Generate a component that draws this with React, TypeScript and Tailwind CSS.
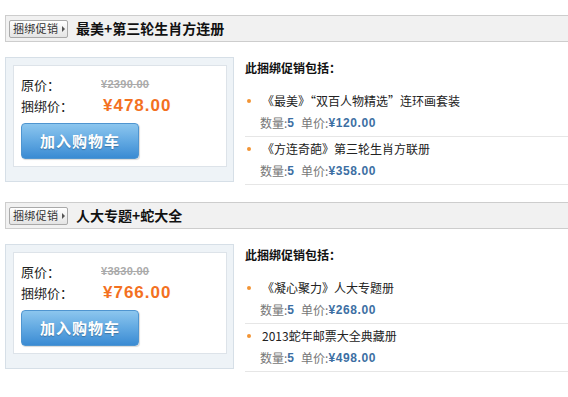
import React from 'react';

interface BundleItem {
  name: string;
  qty: number;
  price: string;
}

interface Bundle {
  title: string;
  original: string;
  price: string;
  items: BundleItem[];
}

const bundles: Bundle[] = [
  {
    title: '最美+第三轮生肖方连册',
    original: '¥2390.00',
    price: '¥478.00',
    items: [
      { name: '《最美》“双百人物精选”连环画套装', qty: 5, price: '¥120.00' },
      { name: '《方连奇葩》第三轮生肖方联册', qty: 5, price: '¥358.00' },
    ],
  },
  {
    title: '人大专题+蛇大全',
    original: '¥3830.00',
    price: '¥766.00',
    items: [
      { name: '《凝心聚力》人大专题册', qty: 5, price: '¥268.00' },
      { name: '2013蛇年邮票大全典藏册', qty: 5, price: '¥498.00' },
    ],
  },
];

const cjk = "font-['Noto_Sans_CJK_SC','Noto_Sans',sans-serif]";

// 左侧价格框
function PriceBox({ bundle }: { bundle: Bundle }) {
  return (
    <div className="w-[229px] shrink-0 border border-[#d6dfe7] bg-[#eef3f7] pt-[7px] pr-[6px] pb-[14px] pl-[7px]">
      <div className="border border-[#dde3e9] bg-white px-[7px] pt-[8px] pb-[7px]">
        <div className="flex h-[21px] items-center text-[13px] text-[#222]">
          <span className="w-[80px]">原价：</span>
          <span className="font-['Liberation_Sans',sans-serif] text-[11px] font-bold tracking-[0.3px] text-[#aaa] line-through">
            {bundle.original}
          </span>
        </div>
        <div className="flex h-[21px] items-center text-[13px] text-[#222]">
          <span className="w-[82px]">捆绑价：</span>
          <span className="font-['Liberation_Sans',sans-serif] text-[17px] font-bold tracking-[1px] text-[#f3711f]">
            {bundle.price}
          </span>
        </div>
        <button className="mt-[7px] flex h-[36px] w-[118px] items-center justify-center rounded-[4px] border border-[#4f95d0] bg-gradient-to-b from-[#8cc6ee] via-[#62a9e2] to-[#3a8bd3] text-[15px] font-bold tracking-[1px] text-white shadow-[1px_1px_1px_rgba(0,0,0,0.15)] [text-shadow:0_1px_1px_rgba(0,0,0,0.25)]">
          加入购物车
        </button>
      </div>
    </div>
  );
}

function ItemList({ items }: { items: BundleItem[] }) {
  return (
    <div className="flex-1">
      <div className="flex h-[22px] items-center text-[12px] font-bold text-[#111]">此捆绑促销包括：</div>
      <ul className="mt-[10px]">
        {items.map((item) => (
          <li key={item.name} className="border-b border-[#e6e6e6] pt-[1px] pb-[2px]">
            <div className="flex h-[22px] items-center text-[12px] text-[#222]">
              <span className="ml-[2px] mr-[11px] h-[4px] w-[4px] rounded-full bg-[#f29434]" />
              {item.name}
            </div>
            <div className="flex h-[22px] items-center pl-[15px] text-[12px] text-[#777]">
              数量:
              <span className="font-['Liberation_Sans',sans-serif] font-bold text-[#3d6fa3]">{item.qty}</span>
              <span className="ml-[7px]">单价:</span>
              <span className="font-['Liberation_Sans',sans-serif] font-bold tracking-[0.6px] text-[#3d6fa3]">{item.price}</span>
            </div>
          </li>
        ))}
      </ul>
    </div>
  );
}

export default function App() {
  return (
    <div className={`${cjk} min-h-[397px] bg-white pt-[15px] pl-[5px]`}>
      <div className="flex flex-col gap-[17px]">
        {bundles.map((b) => (
          <section key={b.title}>
            <div className="flex h-[27px] items-center border-y border-l border-[#cdcdcd] bg-[#f1f1f1]">
              <span className="ml-[3px] flex h-[18px] w-[59px] items-center gap-[4px] rounded-[2px] border border-[#a9a9a9] bg-gradient-to-b from-white to-[#e4e4e4] pl-[3px] text-[11px] tracking-[0.3px] text-[#333]">
                捆绑促销
                <span className="h-0 w-0 border-y-[3px] border-l-[3px] border-y-transparent border-l-[#555]" />
              </span>
              <h2 className="ml-[8px] text-[14px] font-bold text-[#111]">{b.title}</h2>
            </div>
            <div className="mt-[15px] flex items-start gap-[11px]">
              <PriceBox bundle={b} />
              <ItemList items={b.items} />
            </div>
          </section>
        ))}
      </div>
    </div>
  );
}
